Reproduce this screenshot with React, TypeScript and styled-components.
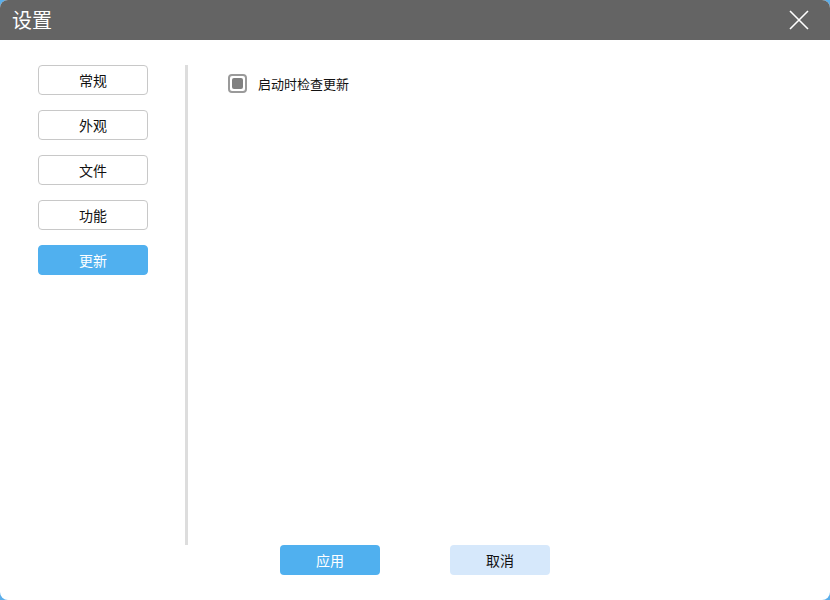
import React, { useState } from 'react'
import styled, { createGlobalStyle } from 'styled-components'

const GlobalStyle = createGlobalStyle`
    html, body {
        margin: 0;
        padding: 0;
        background: #5aaeea;
    }
    body {
        font-family: "Noto Sans CJK SC", "Noto Sans", sans-serif;
    }
`

const Window = styled.div`
    width: 830px;
    height: 600px;
    background: #ffffff;
    border-radius: 8px;
    overflow: hidden;
    display: flex;
    flex-direction: column;
`

const TitleBar = styled.div`
    height: 40px;
    flex: none;
    background: #646464;
    display: flex;
    align-items: center;
    justify-content: space-between;
    padding: 0 20px 0 12px;
    color: #ffffff;
`

const Title = styled.div`
    font-size: 20px;
    line-height: 40px;
`

const CloseButton = styled.div`
    width: 22px;
    height: 22px;
    display: flex;
    align-items: center;
    justify-content: center;
    cursor: pointer;
`

const Body = styled.div`
    flex: 1;
    display: flex;
    flex-direction: column;
    padding: 25px 0 25px 0;
`

const Main = styled.div`
    height: 480px;
    display: flex;
`

const Sidebar = styled.div`
    width: 110px;
    padding: 0 37px 0 38px;
    display: flex;
    flex-direction: column;
    gap: 15px;
`

const NavButton = styled.div<{ $active?: boolean }>`
    height: 30px;
    box-sizing: border-box;
    border-radius: 4px;
    border: 1px solid ${({ $active }) => ($active ? '#50b0ef' : '#c8c8c8')};
    background: ${({ $active }) => ($active ? '#50b0ef' : '#ffffff')};
    color: ${({ $active }) => ($active ? '#ffffff' : '#111111')};
    font-size: 14px;
    display: flex;
    align-items: center;
    justify-content: center;
    cursor: pointer;
`

const Divider = styled.div`
    width: 3px;
    background: #dddddd;
`

const Content = styled.div`
    flex: 1;
    padding: 9px 0 0 40px;
`

const CheckRow = styled.label`
    display: flex;
    align-items: center;
    gap: 11px;
    font-size: 13px;
    color: #111111;
    cursor: pointer;
`

const CheckBox = styled.span<{ $checked: boolean }>`
    width: 19px;
    height: 19px;
    box-sizing: border-box;
    border: 2px solid #9a9a9a;
    border-radius: 4px;
    padding: 2px;
    display: flex;

    &::after {
        content: '';
        flex: 1;
        border-radius: 2px;
        background: ${({ $checked }) => ($checked ? '#808080' : 'transparent')};
    }
`

const Footer = styled.div`
    height: 30px;
    display: flex;
    gap: 70px;
    padding-left: 280px;
`

const FooterButton = styled.div<{ $primary?: boolean }>`
    width: 100px;
    height: 30px;
    border-radius: 4px;
    background: ${({ $primary }) => ($primary ? '#50b0ef' : '#d6e8fb')};
    color: ${({ $primary }) => ($primary ? '#ffffff' : '#111111')};
    font-size: 14px;
    display: flex;
    align-items: center;
    justify-content: center;
    cursor: pointer;
`

const tabs = ['常规', '外观', '文件', '功能', '更新']

export default function App() {
    const [active, setActive] = useState('更新')
    const [checked, setChecked] = useState(true)

    return (
        <>
            <GlobalStyle />
            <Window>
                <TitleBar>
                    <Title>设置</Title>
                    <CloseButton>
                        <svg width="20" height="20" viewBox="0 0 20 20">
                            <path
                                d="M1 1 L19 19 M19 1 L1 19"
                                stroke="#ffffff"
                                strokeWidth="1.6"
                                fill="none"
                            />
                        </svg>
                    </CloseButton>
                </TitleBar>
                <Body>
                    <Main>
                        <Sidebar>
                            {tabs.map((t) => (
                                <NavButton
                                    key={t}
                                    $active={t === active}
                                    onClick={() => setActive(t)}>
                                    {t}
                                </NavButton>
                            ))}
                        </Sidebar>
                        <Divider />
                        <Content>
                            <CheckRow onClick={() => setChecked(!checked)}>
                                <CheckBox $checked={checked} />
                                启动时检查更新
                            </CheckRow>
                        </Content>
                    </Main>
                    <Footer>
                        <FooterButton $primary>应用</FooterButton>
                        <FooterButton>取消</FooterButton>
                    </Footer>
                </Body>
            </Window>
        </>
    )
}
